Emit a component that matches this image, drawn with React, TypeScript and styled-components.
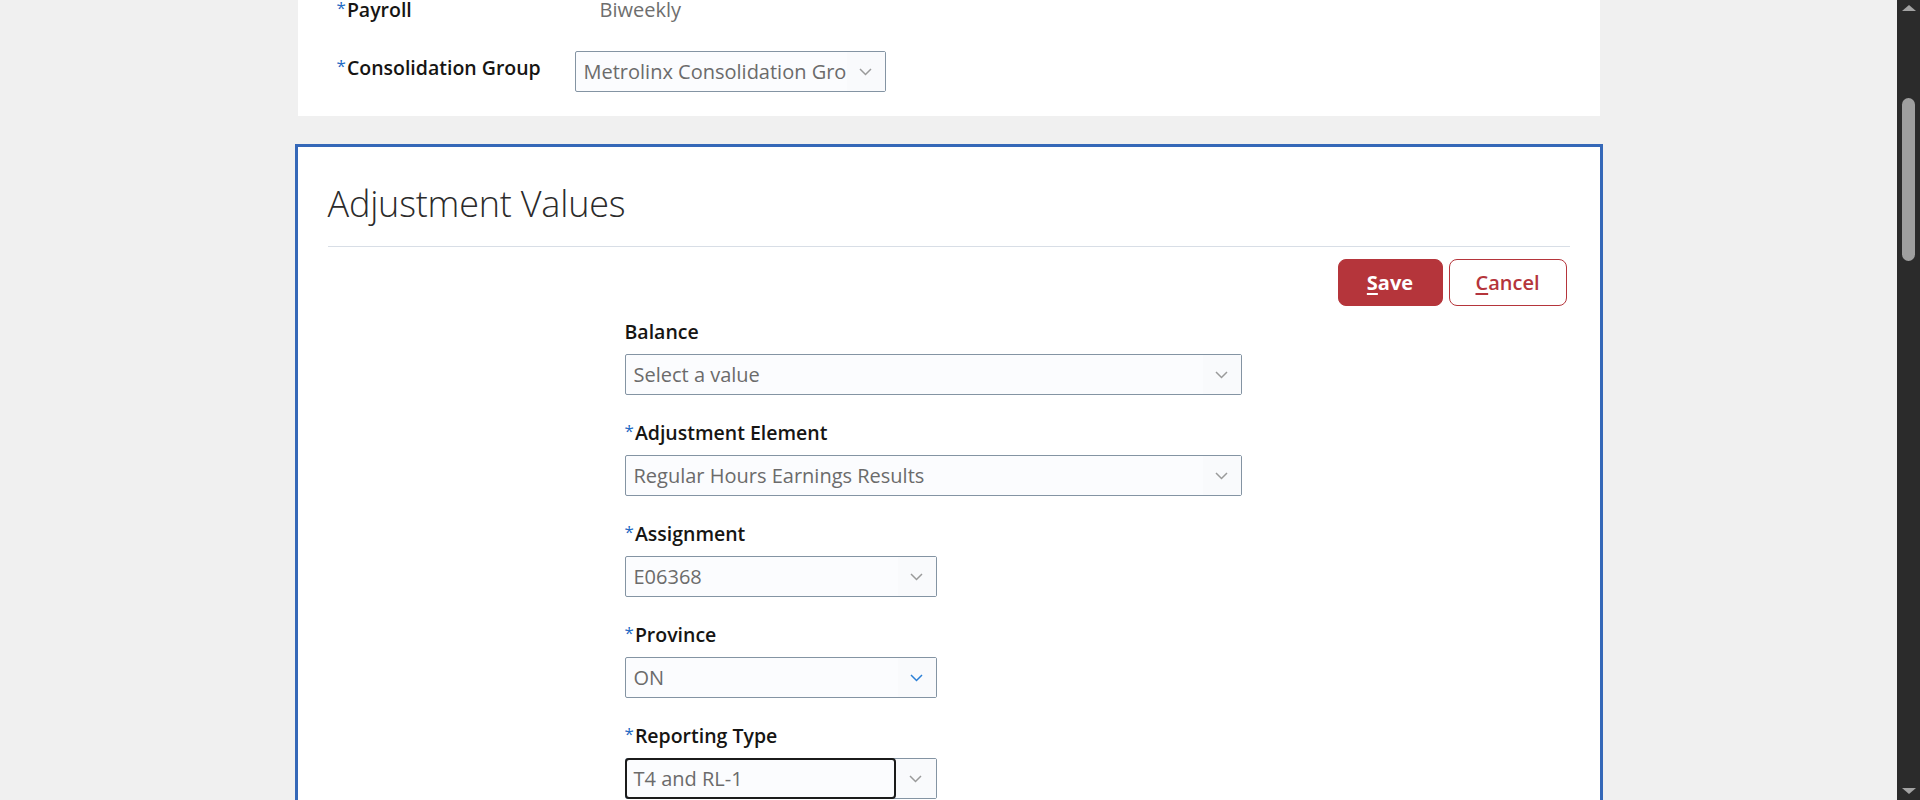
import React from "react";
import styled, { createGlobalStyle } from "styled-components";

const GlobalStyle = createGlobalStyle`
  html, body {
    margin: 0;
    padding: 0;
    height: 100%;
    overflow: hidden;
  }
  body {
    background: #f0f0f0;
    font-family: "Open Sans", "Noto Sans", "Liberation Sans", sans-serif;
    color: #161513;
  }
`;

const Screen = styled.div`
  display: flex;
  height: 800px;
`;

const Viewport = styled.main`
  flex: 1;
  overflow: hidden;
`;

// page is scrolled a little, so the first row is cut at the top
const Content = styled.div`
  width: 1302px;
  margin: -2px auto 0;
`;

const TopPanel = styled.section`
  background: #fff;
  display: grid;
  grid-template-columns: 238px 311px;
  row-gap: 29px;
  padding: 0 0 24px 39px;
`;

const Label = styled.label<{ $offset?: number }>`
  display: block;
  font-size: 19.5px;
  line-height: 24px;
  font-weight: 600;
  color: #161513;
  white-space: nowrap;
  padding-top: ${(p) => p.$offset ?? 0}px;
`;

const Req = styled.span`
  color: #1f6ac4;
  font-weight: 400;
  font-size: 17px;
  line-height: 0;
  vertical-align: 3px;
  margin-right: 1px;
`;

const ReadOnly = styled.div`
  font-size: 20px;
  line-height: 24px;
  color: #6e6e6e;
  padding-left: 25px;
`;

const Panel = styled.section`
  margin: 28px -3px 0;
  border: 3px solid #3568b8;
  border-bottom: none;
  background: #fff;
  padding: 0 30px;
  height: 700px;
`;

const Header = styled.header`
  padding: 35px 0 20px;
  border-bottom: 1px solid #d8dee6;
`;

const Title = styled.h2`
  margin: 0;
  font-size: 36px;
  line-height: 44px;
  font-weight: 300;
  color: #2b2b2b;
  letter-spacing: -0.2px;
`;

const Actions = styled.div`
  display: flex;
  justify-content: flex-end;
  gap: 6px;
  padding: 12px 3px 0 0;
`;

const Button = styled.button<{ $primary?: boolean }>`
  height: 47px;
  padding: 0;
  width: ${(p) => (p.$primary ? 105 : 118)}px;
  border-radius: 8px;
  border: 1px solid #b5353b;
  background: ${(p) => (p.$primary ? "#b5353b" : "#fff")};
  color: ${(p) => (p.$primary ? "#fff" : "#b5353b")};
  font-family: inherit;
  font-size: 20px;
  font-weight: ${(p) => (p.$primary ? 700 : 600)};
  cursor: pointer;

  u {
    text-underline-offset: 3px;
  }
`;

const Form = styled.div`
  padding: 14px 0 0 297px;
`;

const Field = styled.div`
  margin-bottom: 26px;

  ${Label} {
    margin-bottom: 10px;
  }
`;

const Box = styled.div<{ $width: number }>`
  display: flex;
  box-sizing: border-box;
  width: ${(p) => p.$width}px;
  height: 41px;
  border: 1px solid #8494a3;
  border-radius: 2px;
  background: #fbfcfe;
`;

const Value = styled.div<{ $focused?: boolean }>`
  flex: 1;
  min-width: 0;
  display: flex;
  align-items: center;
  padding-left: 8px;
  font-size: 20px;
  color: #6b6b6b;
  white-space: nowrap;
  overflow: hidden;
  ${(p) =>
    p.$focused &&
    `
    margin: -1px 0 -1px -1px;
    border: 2px solid #1b1b1b;
    border-radius: 4px;
    padding-left: 7px;
  `}
`;

const Toggle = styled.div<{ $w: number }>`
  flex: 0 0 ${(p) => p.$w}px;
  display: flex;
  align-items: center;
  justify-content: center;
  background: #f9fafc;
`;

const Chevron = ({ color }: { color: string }) => (
  <svg width="13" height="8" viewBox="0 0 13 8" fill="none">
    <polyline points="1,1 6.5,6.5 12,1" stroke={color} strokeWidth="1.5" />
  </svg>
);

type SelectProps = {
  value: string;
  width: number;
  toggle?: number;
  active?: boolean;
  focused?: boolean;
};

const Select = ({ value, width, toggle = 38, active, focused }: SelectProps) => (
  <Box $width={width}>
    <Value $focused={focused}>{value}</Value>
    <Toggle $w={toggle}>
      <Chevron color={active ? "#2b7fd6" : "#9a9a9a"} />
    </Toggle>
  </Box>
);

const ScrollBar = styled.aside`
  width: 23px;
  background: #2b2b2b;
  display: flex;
  flex-direction: column;
  align-items: center;
`;

const Arrow = styled.div<{ $down?: boolean }>`
  width: 0;
  height: 0;
  border-left: 7px solid transparent;
  border-right: 7px solid transparent;
  ${(p) =>
    p.$down
      ? "border-top: 6px solid #a3a3a3; margin: auto 0 6px;"
      : "border-bottom: 6px solid #a3a3a3; margin-top: 5px;"}
`;

const Thumb = styled.div`
  width: 13px;
  border-radius: 7px;
  background: #9f9f9f;
`;

const fields = [
  { label: "Balance", required: false, value: "Select a value", width: 617 },
  { label: "Adjustment Element", required: true, value: "Regular Hours Earnings Results", width: 617 },
  { label: "Assignment", required: true, value: "E06368", width: 312 },
  { label: "Province", required: true, value: "ON", width: 312, active: true },
  { label: "Reporting Type", required: true, value: "T4 and RL-1", width: 312, focused: true, toggle: 40 },
];

export default function App() {
  return (
    <>
      <GlobalStyle />
      <Screen>
        <Viewport>
          <Content>
            <TopPanel>
              <Label>
                <Req>*</Req>Payroll
              </Label>
              <ReadOnly>Biweekly</ReadOnly>
              <Label $offset={5}>
                <Req>*</Req>Consolidation Group
              </Label>
              <Select value="Metrolinx Consolidation Group" width={311} toggle={38} />
            </TopPanel>

            <Panel>
              <Header>
                <Title>Adjustment Values</Title>
              </Header>
              <Actions>
                <Button $primary>
                  <u>S</u>ave
                </Button>
                <Button>
                  <u>C</u>ancel
                </Button>
              </Actions>
              <Form>
                {fields.map((f) => (
                  <Field key={f.label}>
                    <Label>
                      {f.required && <Req>*</Req>}
                      {f.label}
                    </Label>
                    <Select
                      value={f.value}
                      width={f.width}
                      active={f.active}
                      focused={f.focused}
                      toggle={f.toggle}
                    />
                  </Field>
                ))}
              </Form>
            </Panel>
          </Content>
        </Viewport>
        <ScrollBar>
          <Arrow />
          <Thumb style={{ marginTop: 87, height: 163 }} />
          <Arrow $down />
        </ScrollBar>
      </Screen>
    </>
  );
}
